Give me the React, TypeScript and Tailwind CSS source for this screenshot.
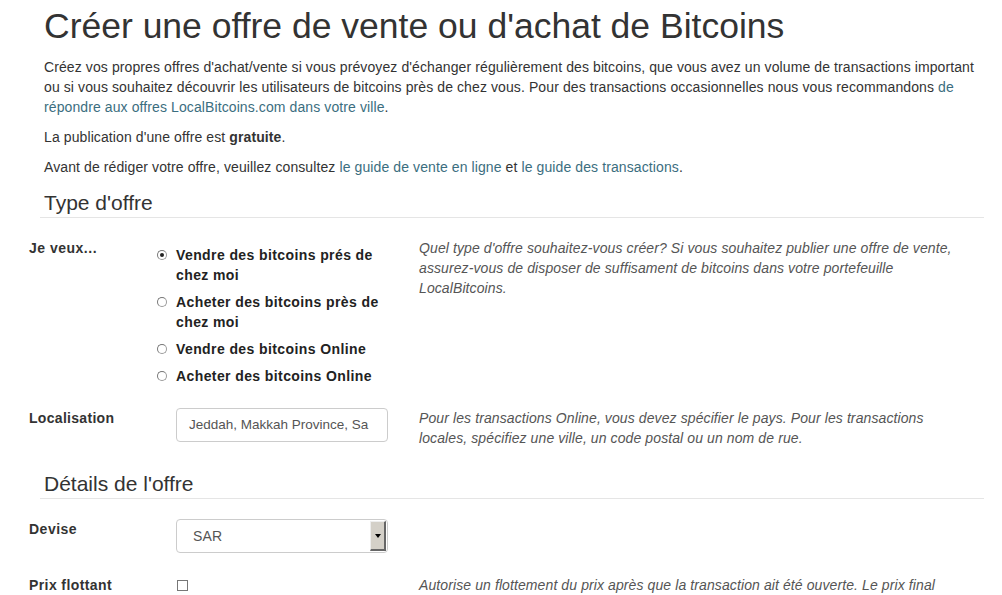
import React from "react";

// Radio bullet drawn with spans so it looks like the old classic-style control
const Radio = ({ checked }: { checked?: boolean }) => (
  <span className="mt-[5px] flex h-[10px] w-[10px] shrink-0 items-center justify-center rounded-full border border-[#9a9a9a] border-l-[#777] border-t-[#777] bg-white">
    {checked && <span className="h-[4px] w-[4px] rounded-full bg-[#222]" />}
  </span>
);

const options = [
  { label: "Vendre des bitcoins prés de chez moi", checked: true },
  { label: "Acheter des bitcoins près de chez moi" },
  { label: "Vendre des bitcoins Online" },
  { label: "Acheter des bitcoins Online" },
];

const row = "grid grid-cols-[116px_212px_1fr] gap-x-[31px] pl-[29px]";

const App = () => {
  return (
    <div className="h-[595px] w-[1002px] overflow-hidden bg-white font-['Liberation_Sans',Arial,sans-serif] text-[14px] leading-5 tracking-[0.1px] text-[#333]">
      {/* Intro */}
      <div className="pl-[44px] pr-[20px]">
        <h1 className="pt-[6px] text-[35.5px] leading-[40px] tracking-normal text-[#333]">
          Créer une offre de vente ou d'achat de Bitcoins
        </h1>
        <p className="mt-[11px]">
          Créez vos propres offres d'achat/vente si vous prévoyez d'échanger régulièrement des bitcoins, que vous avez
          un volume de transactions important ou si vous souhaitez découvrir les utilisateurs de bitcoins près de chez
          vous. Pour des transactions occasionnelles nous vous recommandons{" "}
          <a className="text-[#3b6e80]">de répondre aux offres LocalBitcoins.com dans votre ville</a>.
        </p>
        <p className="mt-[10px]">
          La publication d'une offre est <b>gratuite</b>.
        </p>
        <p className="mt-[10px]">
          Avant de rédiger votre offre, veuillez consultez{" "}
          <a className="text-[#3b6e80]">le guide de vente en ligne</a> et{" "}
          <a className="text-[#3b6e80]">le guide des transactions</a>.
        </p>
      </div>

      {/* Type d'offre */}
      <div className="ml-[40px] mr-[18px] mt-[12px] border-b border-[#e5e5e5] pl-[4px]">
        <h3 className="text-[21px] leading-[28px] tracking-normal">Type d'offre</h3>
      </div>

      <div className={`mt-[20px] ${row}`}>
        <label className="font-bold tracking-[0.5px]">Je veux...</label>
        <div className="flex flex-col gap-[7px] pt-[7px] font-bold tracking-[0.4px] text-[#222]">
          {options.map((o) => (
            <div key={o.label} className="-ml-[19px] flex gap-[9px]">
              <Radio checked={o.checked} />
              <span className="pr-[6px]">{o.label}</span>
            </div>
          ))}
        </div>
        <p className="pr-[40px] italic tracking-[0.1px] text-[#555]">
          Quel type d'offre souhaitez-vous créer? Si vous souhaitez publier une offre de vente, assurez-vous de disposer
          de suffisament de bitcoins dans votre portefeuille LocalBitcoins.
        </p>
      </div>

      <div className={`mt-[22px] ${row}`}>
        <label className="font-bold tracking-[0.3px]">Localisation</label>
        <div className="flex h-[34px] items-center overflow-hidden whitespace-nowrap rounded-[4px] border border-[#ccc] px-[12px] text-[13.5px] tracking-normal text-[#555]">
          Jeddah, Makkah Province, Sa
        </div>
        <p className="pr-[40px] italic tracking-[0.1px] text-[#555]">
          Pour les transactions Online, vous devez spécifier le pays. Pour les transactions locales, spécifiez une
          ville, un code postal ou un nom de rue.
        </p>
      </div>

      {/* Détails de l'offre */}
      <div className="ml-[40px] mr-[18px] mt-[22px] border-b border-[#e5e5e5] pl-[4px]">
        <h3 className="text-[21px] leading-[28px] tracking-normal">Détails de l'offre</h3>
      </div>

      <div className={`mt-[20px] ${row}`}>
        <label className="font-bold tracking-[0.5px]">Devise</label>
        <div className="flex h-[34px] items-stretch overflow-hidden rounded-[4px] border border-[#ccc]">
          <span className="flex flex-1 items-center pl-[16px] text-[#555]">SAR</span>
          <span className="my-[1px] mr-[1px] flex w-[16px] items-center justify-center border-b-2 border-l border-r-2 border-t border-b-[#666] border-l-[#eee] border-r-[#666] border-t-[#eee] bg-[#d4d0c8]">
            <span className="h-0 w-0 border-l-[3px] border-r-[3px] border-t-[4px] border-l-transparent border-r-transparent border-t-black" />
          </span>
        </div>
        <div />
      </div>

      <div className={`mt-[22px] ${row}`}>
        <label className="font-bold tracking-[0.4px]">Prix flottant</label>
        <div className="pt-[5px]">
          <span className="ml-[1px] block h-[11px] w-[11px] border border-[#777] bg-white" />
        </div>
        <p className="pr-[40px] italic tracking-[0.1px] text-[#555]">
          Autorise un flottement du prix après que la transaction ait été ouverte. Le prix final
        </p>
      </div>
    </div>
  );
};

export default App;
